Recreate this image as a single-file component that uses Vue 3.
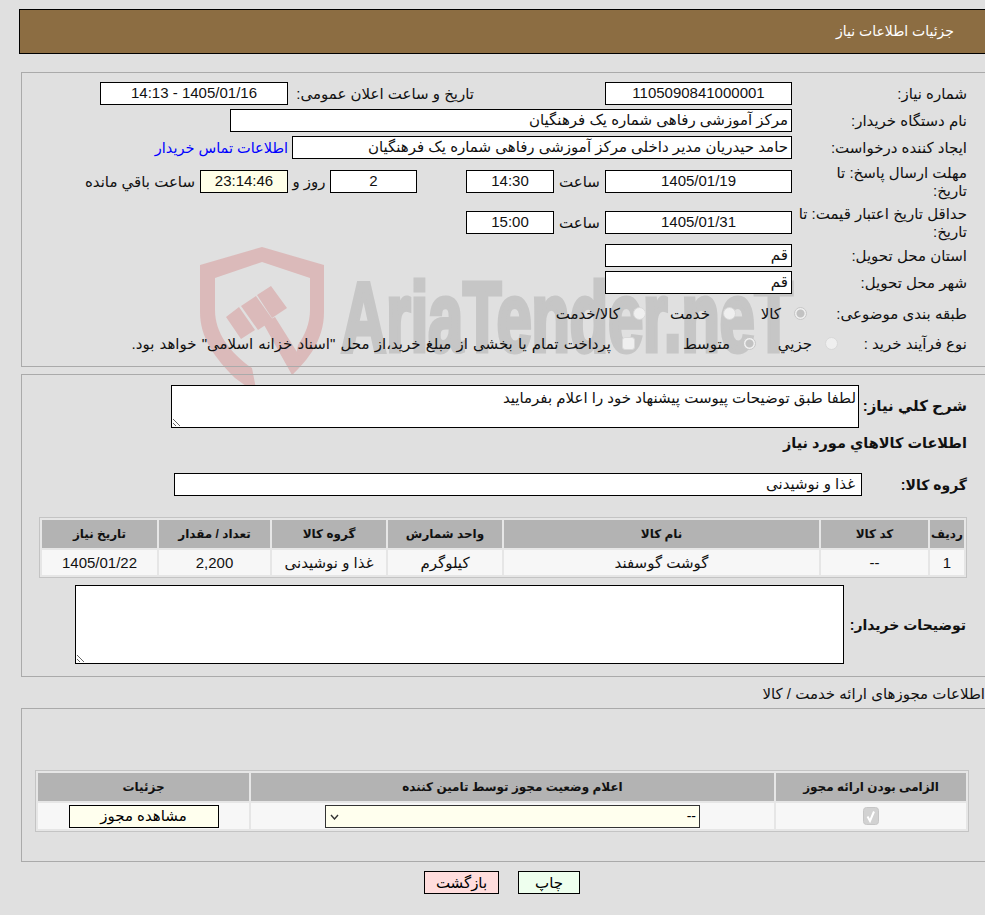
<script setup>
const goods = [
  { row: '1', code: '--', name: 'گوشت گوسفند', unit: 'کیلوگرم', group: 'غذا و نوشیدنی', qty: '2,200', date: '1405/01/22' }
];
</script>

<template>
  <div class="page" dir="rtl">
    <!-- واترمارک پشت فرم -->
    <div class="watermark" aria-hidden="true">
      <svg class="wm-shield" width="130" height="146" viewBox="0 0 130 146">
        <path fill="#dbbaba" d="M57 146 L35 130 C15 110 0 90 0 64 L0 17 L62 -1 L124 17 L124 64 C124 92 108 112 92 127 L98 97 C105 87 110 75 110 62 L110 30 L62 14 L15 30 L15 62 C15 85 30 105 52 120 Z" />
        <path fill="#dbbaba" d="M26 69 L39 59 L55 82 L41 91 Z M41 58 L56 48 L73 72 L58 82 Z M57 47 L71 38 L87 60 L72 70 Z M63 75 L75 69 L102 112 L92 127 Z" />
      </svg>
      <span class="wm-text">AriaTender.neT</span>
    </div>

    <div class="title-bar">جزئیات اطلاعات نیاز</div>

    <section class="panel panel-info">
      <div class="row r1">
        <label class="lbl">شماره نیاز:</label>
        <div class="box box-date center">1105090841000001</div>
        <label class="announce">تاریخ و ساعت اعلان عمومی:</label>
        <div class="box box-announce center">1405/01/16 - 14:13</div>
      </div>
      <div class="row r2">
        <label class="lbl">نام دستگاه خریدار:</label>
        <div class="box box-buyer">مرکز آموزشی رفاهی شماره یک فرهنگیان</div>
      </div>
      <div class="row r3">
        <label class="lbl">ایجاد کننده درخواست:</label>
        <div class="box box-creator">حامد حیدریان مدیر داخلی مرکز آموزشی رفاهی شماره یک فرهنگیان</div>
        <a class="contact">اطلاعات تماس خریدار</a>
      </div>
      <div class="row r4">
        <label class="lbl">مهلت ارسال پاسخ: تا<br />تاریخ:</label>
        <div class="box box-date center">1405/01/19</div>
        <span class="unit">ساعت</span>
        <div class="box box-time center">14:30</div>
        <div class="box box-days center">2</div>
        <span class="unit roz">روز و</span>
        <div class="box box-time timer center">23:14:46</div>
        <span class="remain">ساعت باقي مانده</span>
      </div>
      <div class="row r5">
        <label class="lbl">حداقل تاریخ اعتبار قیمت: تا تاریخ:</label>
        <div class="box box-date center">1405/01/31</div>
        <span class="unit">ساعت</span>
        <div class="box box-time center">15:00</div>
      </div>
      <div class="row r6">
        <label class="lbl">استان محل تحویل:</label>
        <div class="box box-date">قم</div>
      </div>
      <div class="row r7">
        <label class="lbl">شهر محل تحویل:</label>
        <div class="box box-date">قم</div>
      </div>
      <div class="row r8">
        <label class="lbl lbl-cat">طبقه بندی موضوعی:</label>
        <span class="opt o-kala"><input type="radio" disabled checked name="cat" /><span>کالا</span></span>
        <span class="opt o-khed"><input type="radio" disabled name="cat" /><span>خدمت</span></span>
        <span class="opt"><input type="radio" disabled name="cat" /><span>کالا/خدمت</span></span>
      </div>
      <div class="row r9">
        <label class="lbl lbl-proc">نوع فرآیند خرید :</label>
        <span class="opt o-jozi"><input type="radio" disabled name="proc" /><span>جزيي</span></span>
        <span class="opt o-mot"><input type="radio" disabled checked name="proc" /><span>متوسط</span></span>
        <span class="opt o-pay"><input type="checkbox" disabled /><span>پرداخت تمام یا بخشی از مبلغ خرید،از محل "اسناد خزانه اسلامی" خواهد بود.</span></span>
      </div>
    </section>

    <section class="panel panel-desc">
      <div class="desc-row">
        <label class="lbl-b desc-lbl">شرح كلي نیاز:</label>
        <textarea class="area area-desc" readonly>لطفا طبق توضیحات پیوست پیشنهاد خود را اعلام بفرمایید</textarea>
      </div>
      <h3 class="goods-title">اطلاعات كالاهاي مورد نیاز</h3>
      <div class="group-row">
        <label class="lbl-b group-lbl">گروه کالا:</label>
        <div class="box box-group">غذا و نوشیدنی</div>
      </div>
      <table class="grid goods">
        <thead>
          <tr>
            <th class="c1">ردیف</th>
            <th class="c2">کد کالا</th>
            <th class="c3">نام کالا</th>
            <th class="c4">واحد شمارش</th>
            <th class="c5">گروه کالا</th>
            <th class="c6">تعداد / مقدار</th>
            <th class="c7">تاریخ نیاز</th>
          </tr>
        </thead>
        <tbody>
          <tr v-for="g in goods" :key="g.row">
            <td>{{ g.row }}</td>
            <td>{{ g.code }}</td>
            <td>{{ g.name }}</td>
            <td>{{ g.unit }}</td>
            <td>{{ g.group }}</td>
            <td>{{ g.qty }}</td>
            <td>{{ g.date }}</td>
          </tr>
        </tbody>
      </table>
      <div class="note-row">
        <label class="lbl-b note-lbl">توضیحات خریدار:</label>
        <textarea class="area area-note" readonly></textarea>
      </div>
    </section>

    <div class="license-title">اطلاعات مجوزهای ارائه خدمت / کالا</div>

    <section class="panel panel-license">
      <table class="grid license">
        <thead>
          <tr>
            <th class="l1">الزامی بودن ارائه مجوز</th>
            <th class="l2">اعلام وضعیت مجوز توسط تامین کننده</th>
            <th class="l3">جزئیات</th>
          </tr>
        </thead>
        <tbody>
          <tr>
            <td>
              <svg class="req" width="16" height="18" viewBox="0 0 16 18">
                <rect x="0.5" y="0.5" width="15" height="17" rx="3" fill="#d2d2d2" stroke="#c6c6c6" />
                <path d="M4.5 9.5 L7 14 L11 4.5" fill="none" stroke="#fff" stroke-width="2" />
              </svg>
            </td>
            <td>
              <span class="select-wrap">
                <select class="status"><option>--</option></select>
                <svg class="chevron" width="9" height="6" viewBox="0 0 9 6">
                  <path d="M1 1 L4.5 5 L8 1" fill="none" stroke="#333" stroke-width="1.4" />
                </svg>
              </span>
            </td>
            <td><button class="btn-view">مشاهده مجوز</button></td>
          </tr>
        </tbody>
      </table>
    </section>

    <div class="actions">
      <button class="btn btn-print">چاپ</button>
      <button class="btn btn-back">بازگشت</button>
    </div>
  </div>
</template>

<style scoped>
.page {
  position: relative;
  width: 985px;
  height: 915px;
  overflow: hidden;
  padding-top: 9px;
  box-sizing: border-box;
  background: #e0e0e0;
  font-family: "Liberation Sans", "DejaVu Sans", sans-serif;
  font-size: 15px;
  color: #111;
}

/* watermark sits between the page background and the form */
.watermark {
  position: absolute;
  left: 200px;
  top: 248px;
  width: 620px;
  height: 150px;
  direction: ltr;
}
.wm-shield {
  position: absolute;
  left: 0;
  top: 0;
  overflow: visible;
}
.wm-text {
  position: absolute;
  left: 141px;
  top: 9px;
  font-family: "Liberation Sans", sans-serif;
  font-weight: 700;
  font-size: 98px;
  line-height: 120px;
  color: #c6c6c6;
  -webkit-text-stroke: 5px #c6c6c6;
  white-space: nowrap;
  transform-origin: 0 50%;
  transform: scaleX(0.64);
}

.title-bar {
  position: relative;
  height: 43px;
  margin-left: 19px;
  border: 1px solid #000;
  border-right: none;
  background: #8c6d42;
  color: #fff;
  font-size: 14px;
  line-height: 43px;
  padding-right: 31px;
}

.panel {
  position: relative;
  margin-left: 21px;
  border: 1px solid #aaa;
  border-right: none;
  box-sizing: border-box;
}
.panel-info {
  margin-top: 18px;
  height: 295px;
}
.panel-desc {
  margin-top: 7px;
  height: 303px;
}
.panel-license {
  margin-top: 5px;
  height: 154px;
}

.row {
  position: absolute;
  right: 18px;
  left: 0;
  display: flex;
  align-items: center;
  height: 23px;
}
.r1 { top: 9px; }
.r2 { top: 36px; }
.r3 { top: 63px; }
.r4 { top: 97px; }
.r5 { top: 138px; }
.r6 { top: 171px; }
.r7 { top: 198px; }
.r8 { top: 229px; }
.r9 { top: 259px; }

.lbl {
  width: 175px;
  flex: none;
  box-sizing: border-box;
  padding-left: 4px;
  line-height: 18px;
}
.lbl-cat { width: 160px; padding-left: 0; }
.lbl-proc { width: 129px; padding-left: 0; }
.box {
  flex: none;
  height: 23px;
  box-sizing: border-box;
  border: 1px solid #000;
  background: #fff;
  line-height: 20px;
  padding: 0 3px;
  white-space: nowrap;
}
.center {
  text-align: center;
}
.box-date { width: 187px; }
.box-announce { width: 188px; }
.box-time { width: 88px; }
.box-days { width: 87px; margin-right: 49px; }
.box-buyer { width: 562px; }
.box-creator { width: 500px; }
.box-group { width: 688px; margin-right: 39px; padding-right: 6px; }
.announce {
  flex: none;
  width: 317px;
  box-sizing: border-box;
  padding-right: 131px;
  white-space: nowrap;
}
.contact {
  margin-right: 4px;
  font-size: 14.5px;
  color: #00f;
}
.unit {
  width: 51px;
  flex: none;
  text-align: center;
}
.roz { width: 42px; }
.timer { background: #ffffe8; }
.remain { margin-right: 5px; white-space: nowrap; }

.opt {
  display: inline-flex;
  align-items: center;
  flex: none;
  white-space: nowrap;
}
/* گزینه های غیرفعال کمرنگ هستند */
.opt input {
  appearance: none;
  box-sizing: border-box;
  width: 13px;
  height: 13px;
  margin: 0 0 0 13px;
  border: 1px solid #d8d8d8;
  background: #efefef;
}
.opt input[type="radio"] { border-radius: 50%; }
.opt input[type="radio"]:checked {
  background: radial-gradient(circle, #c2c2c2 0 3.5px, #efefef 4.5px);
  border-color: #c8c8c8;
}
.opt input[type="checkbox"] { border-radius: 3px; margin-left: 11px; }
.o-kala { width: 71px; }
.o-khed { width: 90px; }
.o-jozi { width: 82px; }
.o-mot { width: 121px; }
.o-pay { word-spacing: 1px; }

.desc-row {
  display: flex;
  align-items: center;
  height: 42px;
  margin-top: 10px;
  padding-right: 18px;
}
.lbl-b {
  font-weight: 700;
  font-size: 14px;
  white-space: nowrap;
}
.desc-lbl { width: 108px; flex: none; font-size: 15px; }
.area {
  display: block;
  box-sizing: border-box;
  border: 1px solid #000;
  background: #fff;
  font: inherit;
  color: inherit;
  padding: 3px 2px 2px;
}
.area-desc { width: 688px; height: 43px; }
.goods-title {
  margin: 6px 18px 0 0;
  font-size: 14.5px;
  line-height: 20px;
}
.group-row {
  display: flex;
  align-items: center;
  margin-top: 20px;
  padding-right: 18px;
}
.group-lbl { width: 66px; flex: none; }

.grid {
  border-collapse: separate;
  border-spacing: 2px;
  border: 1px solid #c4c4c4;
  table-layout: fixed;
  background: #e6e6e6;
}
.grid th {
  height: 28px;
  padding: 0;
  background: #b3b3b3;
  font-size: 12px;
  font-weight: 700;
}
.grid td {
  padding: 0;
  height: 25px;
  background: #f7f7f7;
  text-align: center;
}
.goods {
  position: absolute;
  top: 142px;
  left: 17px;
  width: 928px;
}
.c1 { width: 34px; }
.c2 { width: 107px; }
.c3 { width: 315px; }
.c4 { width: 114px; }
.c5 { width: 114px; }
.c6 { width: 111px; }

.note-row {
  position: absolute;
  top: 210px;
  right: 19px;
  display: flex;
  align-items: center;
}
.note-lbl { width: 122px; flex: none; }
.area-note { width: 769px; height: 79px; }

.license-title {
  position: relative;
  margin-top: 8px;
  line-height: 18px;
}
.license {
  position: absolute;
  top: 61px;
  left: 13px;
  width: 934px;
}
.license td { height: 26px; }
.l1 { width: 190px; }
.l2 { width: 523px; }
.req {
  display: block;
  margin: 0 auto;
}
.select-wrap {
  position: relative;
  display: block;
  width: 375px;
  margin: 0 auto;
}
.status {
  display: block;
  appearance: none;
  width: 375px;
  height: 23px;
  box-sizing: border-box;
  border: 1px solid #333;
  border-radius: 0;
  background: #ffffee;
  font: inherit;
  font-size: 14px;
  padding: 0 3px;
}
.chevron {
  position: absolute;
  left: 5px;
  top: 9px;
}
.btn-view {
  display: block;
  margin: 0 auto;
  width: 150px;
  height: 23px;
  border: 1px solid #000;
  background: #ffffee;
  font: inherit;
  padding: 0;
}
.actions {
  position: relative;
  display: flex;
  justify-content: center;
  gap: 19px;
  margin-top: 9px;
  padding-left: 19px;
}
.btn {
  height: 23px;
  box-sizing: border-box;
  border: 1px solid #000;
  font: inherit;
  padding: 0;
}
.btn-print { width: 62px; background: #eeffee; }
.btn-back { width: 75px; background: #ffdddd; }
</style>
